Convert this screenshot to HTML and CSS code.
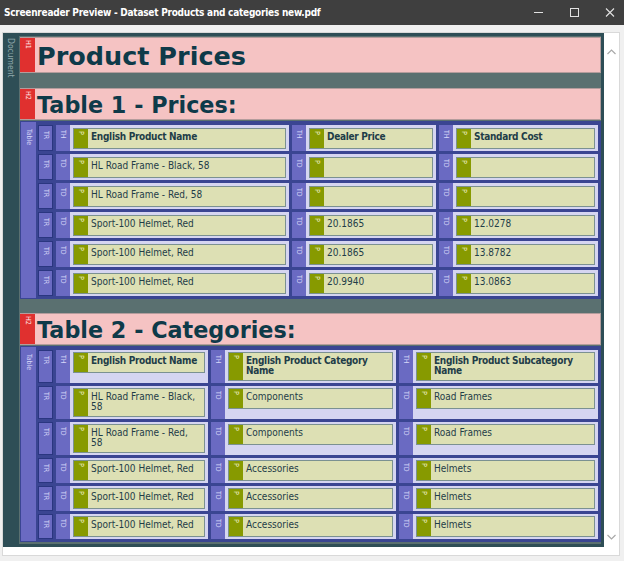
FILE: index.html
```html
<!DOCTYPE html>
<html>
<head>
<meta charset="utf-8">
<link rel="stylesheet" href="styles.css">
</head>
<body>
<div class="titlebar">
  <span class="title">Screenreader Preview - Dataset Products and categories new.pdf</span>
  <div class="controls">
    <svg class="btn" width="36" height="25" viewBox="0 0 36 25"><line x1="14" y1="12.5" x2="23" y2="12.5" stroke="#e2e2e2" stroke-width="1"/></svg>
    <svg class="btn" width="36" height="25" viewBox="0 0 36 25"><rect x="14.5" y="8.5" width="8" height="8" fill="none" stroke="#e2e2e2" stroke-width="1"/></svg>
    <svg class="btn" width="32" height="25" viewBox="0 0 32 25"><path d="M14 8.5 L22 16.5 M22 8.5 L14 16.5" stroke="#e2e2e2" stroke-width="1.1"/></svg>
  </div>
</div>
<div class="main">
  <div class="panel">
    <div class="doc">
      <div class="doc-label"><span>Document</span></div>
      <div class="doc-body">
        <div class="h h1"><div class="htag"><span>H1</span></div><div class="h-text">Product Prices</div></div>
        <div class="h h2"><div class="htag"><span>H2</span></div><div class="h-text">Table 1 - Prices:</div></div>
        <div class="table t1">
          <div class="ttag"><span>Table</span></div>
          <div class="rows">
            <div class="tr">
              <div class="tr-tag"><span>TR</span></div>
              <div class="cell"><div class="ctag"><span>TH</span></div><div class="cbody"><div class="p"><div class="ptag"><span>P</span></div><div class="ptext bold">English Product Name</div></div></div></div>
              <div class="cell"><div class="ctag"><span>TH</span></div><div class="cbody"><div class="p"><div class="ptag"><span>P</span></div><div class="ptext bold">Dealer Price</div></div></div></div>
              <div class="cell"><div class="ctag"><span>TH</span></div><div class="cbody"><div class="p"><div class="ptag"><span>P</span></div><div class="ptext bold">Standard Cost</div></div></div></div>
            </div>
            <div class="tr">
              <div class="tr-tag"><span>TR</span></div>
              <div class="cell"><div class="ctag"><span>TD</span></div><div class="cbody"><div class="p"><div class="ptag"><span>P</span></div><div class="ptext">HL Road Frame - Black, 58</div></div></div></div>
              <div class="cell"><div class="ctag"><span>TD</span></div><div class="cbody"><div class="p"><div class="ptag"><span>P</span></div><div class="ptext"></div></div></div></div>
              <div class="cell"><div class="ctag"><span>TD</span></div><div class="cbody"><div class="p"><div class="ptag"><span>P</span></div><div class="ptext"></div></div></div></div>
            </div>
            <div class="tr">
              <div class="tr-tag"><span>TR</span></div>
              <div class="cell"><div class="ctag"><span>TD</span></div><div class="cbody"><div class="p"><div class="ptag"><span>P</span></div><div class="ptext">HL Road Frame - Red, 58</div></div></div></div>
              <div class="cell"><div class="ctag"><span>TD</span></div><div class="cbody"><div class="p"><div class="ptag"><span>P</span></div><div class="ptext"></div></div></div></div>
              <div class="cell"><div class="ctag"><span>TD</span></div><div class="cbody"><div class="p"><div class="ptag"><span>P</span></div><div class="ptext"></div></div></div></div>
            </div>
            <div class="tr">
              <div class="tr-tag"><span>TR</span></div>
              <div class="cell"><div class="ctag"><span>TD</span></div><div class="cbody"><div class="p"><div class="ptag"><span>P</span></div><div class="ptext">Sport-100 Helmet, Red</div></div></div></div>
              <div class="cell"><div class="ctag"><span>TD</span></div><div class="cbody"><div class="p"><div class="ptag"><span>P</span></div><div class="ptext">20.1865</div></div></div></div>
              <div class="cell"><div class="ctag"><span>TD</span></div><div class="cbody"><div class="p"><div class="ptag"><span>P</span></div><div class="ptext">12.0278</div></div></div></div>
            </div>
            <div class="tr">
              <div class="tr-tag"><span>TR</span></div>
              <div class="cell"><div class="ctag"><span>TD</span></div><div class="cbody"><div class="p"><div class="ptag"><span>P</span></div><div class="ptext">Sport-100 Helmet, Red</div></div></div></div>
              <div class="cell"><div class="ctag"><span>TD</span></div><div class="cbody"><div class="p"><div class="ptag"><span>P</span></div><div class="ptext">20.1865</div></div></div></div>
              <div class="cell"><div class="ctag"><span>TD</span></div><div class="cbody"><div class="p"><div class="ptag"><span>P</span></div><div class="ptext">13.8782</div></div></div></div>
            </div>
            <div class="tr">
              <div class="tr-tag"><span>TR</span></div>
              <div class="cell"><div class="ctag"><span>TD</span></div><div class="cbody"><div class="p"><div class="ptag"><span>P</span></div><div class="ptext">Sport-100 Helmet, Red</div></div></div></div>
              <div class="cell"><div class="ctag"><span>TD</span></div><div class="cbody"><div class="p"><div class="ptag"><span>P</span></div><div class="ptext">20.9940</div></div></div></div>
              <div class="cell"><div class="ctag"><span>TD</span></div><div class="cbody"><div class="p"><div class="ptag"><span>P</span></div><div class="ptext">13.0863</div></div></div></div>
            </div>
          </div>
        </div>
        <div class="h h2"><div class="htag"><span>H2</span></div><div class="h-text">Table 2 - Categories:</div></div>
        <div class="table t2">
          <div class="ttag"><span>Table</span></div>
          <div class="rows">
            <div class="tr">
              <div class="tr-tag"><span>TR</span></div>
              <div class="cell"><div class="ctag"><span>TH</span></div><div class="cbody"><div class="p"><div class="ptag"><span>P</span></div><div class="ptext bold">English Product Name</div></div></div></div>
              <div class="cell"><div class="ctag"><span>TH</span></div><div class="cbody"><div class="p"><div class="ptag"><span>P</span></div><div class="ptext bold">English Product Category Name</div></div></div></div>
              <div class="cell"><div class="ctag"><span>TH</span></div><div class="cbody"><div class="p"><div class="ptag"><span>P</span></div><div class="ptext bold">English Product Subcategory Name</div></div></div></div>
            </div>
            <div class="tr">
              <div class="tr-tag"><span>TR</span></div>
              <div class="cell"><div class="ctag"><span>TD</span></div><div class="cbody"><div class="p"><div class="ptag"><span>P</span></div><div class="ptext">HL Road Frame - Black, 58</div></div></div></div>
              <div class="cell"><div class="ctag"><span>TD</span></div><div class="cbody"><div class="p"><div class="ptag"><span>P</span></div><div class="ptext">Components</div></div></div></div>
              <div class="cell"><div class="ctag"><span>TD</span></div><div class="cbody"><div class="p"><div class="ptag"><span>P</span></div><div class="ptext">Road Frames</div></div></div></div>
            </div>
            <div class="tr">
              <div class="tr-tag"><span>TR</span></div>
              <div class="cell"><div class="ctag"><span>TD</span></div><div class="cbody"><div class="p"><div class="ptag"><span>P</span></div><div class="ptext">HL Road Frame - Red, 58</div></div></div></div>
              <div class="cell"><div class="ctag"><span>TD</span></div><div class="cbody"><div class="p"><div class="ptag"><span>P</span></div><div class="ptext">Components</div></div></div></div>
              <div class="cell"><div class="ctag"><span>TD</span></div><div class="cbody"><div class="p"><div class="ptag"><span>P</span></div><div class="ptext">Road Frames</div></div></div></div>
            </div>
            <div class="tr">
              <div class="tr-tag"><span>TR</span></div>
              <div class="cell"><div class="ctag"><span>TD</span></div><div class="cbody"><div class="p"><div class="ptag"><span>P</span></div><div class="ptext">Sport-100 Helmet, Red</div></div></div></div>
              <div class="cell"><div class="ctag"><span>TD</span></div><div class="cbody"><div class="p"><div class="ptag"><span>P</span></div><div class="ptext">Accessories</div></div></div></div>
              <div class="cell"><div class="ctag"><span>TD</span></div><div class="cbody"><div class="p"><div class="ptag"><span>P</span></div><div class="ptext">Helmets</div></div></div></div>
            </div>
            <div class="tr">
              <div class="tr-tag"><span>TR</span></div>
              <div class="cell"><div class="ctag"><span>TD</span></div><div class="cbody"><div class="p"><div class="ptag"><span>P</span></div><div class="ptext">Sport-100 Helmet, Red</div></div></div></div>
              <div class="cell"><div class="ctag"><span>TD</span></div><div class="cbody"><div class="p"><div class="ptag"><span>P</span></div><div class="ptext">Accessories</div></div></div></div>
              <div class="cell"><div class="ctag"><span>TD</span></div><div class="cbody"><div class="p"><div class="ptag"><span>P</span></div><div class="ptext">Helmets</div></div></div></div>
            </div>
            <div class="tr">
              <div class="tr-tag"><span>TR</span></div>
              <div class="cell"><div class="ctag"><span>TD</span></div><div class="cbody"><div class="p"><div class="ptag"><span>P</span></div><div class="ptext">Sport-100 Helmet, Red</div></div></div></div>
              <div class="cell"><div class="ctag"><span>TD</span></div><div class="cbody"><div class="p"><div class="ptag"><span>P</span></div><div class="ptext">Accessories</div></div></div></div>
              <div class="cell"><div class="ctag"><span>TD</span></div><div class="cbody"><div class="p"><div class="ptag"><span>P</span></div><div class="ptext">Helmets</div></div></div></div>
            </div>
          </div>
        </div>
      </div>
    </div>
    <div class="scrollbar">
      <svg width="15" height="10" viewBox="0 0 15 10"><path d="M3.5 7 L7.5 3 L11.5 7" fill="none" stroke="#a8a8a8" stroke-width="1.2"/></svg>
      <svg width="15" height="10" viewBox="0 0 15 10"><path d="M3.5 3 L7.5 7 L11.5 3" fill="none" stroke="#a8a8a8" stroke-width="1.2"/></svg>
    </div>
  </div>
</div>
</body>
</html>
```

FILE: styles.css
```css
* { box-sizing: border-box; }
html, body { margin: 0; padding: 0; }
body {
  width: 624px;
  height: 561px;
  overflow: hidden;
  background: #f0f0f0;
  font-family: "DejaVu Sans Condensed", "DejaVu Sans", sans-serif;
}

.titlebar {
  height: 25px;
  background: #3f3f3f;
  display: flex;
  align-items: center;
  justify-content: space-between;
  padding-left: 4px;
}
.title {
  color: #ffffff;
  font-weight: bold;
  font-size: 10px;
  letter-spacing: -0.25px;
  white-space: nowrap;
}
.controls { display: flex; }
.btn { display: block; }

.main { padding: 7px 4px 5px 2px; }
.panel {
  height: 524px;
  background: #ffffff;
  border: 1px solid #d9d9d9;
  display: flex;
  align-items: flex-start;
}
.doc {
  width: 601px;
  height: 514px;
  background: #2e4e56;
  display: flex;
  overflow: hidden;
}
.doc-label {
  width: 16px;
  flex: none;
  display: flex;
  flex-direction: column;
  align-items: center;
  padding-top: 5px;
}
.doc-label span {
  writing-mode: vertical-rl;
  font-size: 8.5px;
  color: #8fa7ab;
}
.doc-body {
  flex: 1;
  margin: 3px 3px 3px 0;
  background: #5a7070;
  padding: 1px 0 0 1px;
  overflow: hidden;
}

.h {
  display: flex;
  background: #f5c3c3;
  border: 1px solid #b49c9c;
  border-left: none;
}
.h1 { height: 36px; margin-bottom: 15px; }
.h2 { height: 32px; }
.htag {
  width: 15px;
  flex: none;
  background: #e0302f;
  display: flex;
  flex-direction: column;
  align-items: center;
  padding-top: 2px;
}
.htag span, .ttag span, .tr-tag span, .ctag span, .ptag span {
  writing-mode: vertical-rl;
  font-size: 7px;
  line-height: 8px;
}
.htag span { color: #ffe8e8; }
.h-text {
  font-family: "DejaVu Sans", sans-serif;
  font-weight: bold;
  color: #0e3a49;
  padding-left: 2px;
}
.h1 .h-text { font-size: 25.5px; line-height: 34px; padding-top: 1px; }
.h2 .h-text { font-size: 22.3px; line-height: 30px; padding-top: 1px; }

.table {
  display: flex;
  background: #6a6ac2;
  border: 1px solid #3a4592;
  margin-top: 1px;
}
.t1 { margin-bottom: 14px; }
.ttag {
  width: 15px;
  flex: none;
  display: flex;
  flex-direction: column;
  align-items: center;
  padding-top: 7px;
}
.ttag span { color: #d2d2f6; }
.rows {
  flex: 1;
  background: #3a4592;
  padding: 3px 2px 2px 2px;
  display: flex;
  flex-direction: column;
  gap: 3px;
}
.tr {
  display: grid;
  column-gap: 3px;
}
.t1 .tr { grid-template-columns: 15px 233px 144px 159px; }
.t2 .tr { grid-template-columns: 15px 152px 185px 199px; }
.tr-tag {
  background: #6a6ac2;
  border: 1px solid #2a3680;
  display: flex;
  flex-direction: column;
  align-items: center;
  padding-top: 5px;
}
.tr-tag span, .ctag span { color: #d6d6f8; }
.cell { display: flex; }
.ctag {
  width: 14px;
  flex: none;
  background: #6a6ac2;
  display: flex;
  flex-direction: column;
  align-items: center;
  padding-top: 5px;
}
.cbody {
  flex: 1;
  background: #d5d5f1;
  padding: 3px 3px 2px 3px;
}
.t2 .cbody { padding: 2px 3px; }
.p {
  display: flex;
  min-height: 21px;
  background: #dde0b4;
  border: 1px solid #7b9191;
}
.ptag {
  width: 14px;
  flex: none;
  background: #879a00;
  display: flex;
  flex-direction: column;
  align-items: center;
  padding-top: 2px;
}
.ptag span { color: #f4f4d8; }
.ptext {
  flex: 1;
  padding: 3px 3px 4px 3px;
  font-size: 10px;
  line-height: 10px;
  color: #1f3d48;
}
.bold { font-weight: bold; letter-spacing: -0.3px; }

.scrollbar {
  width: 15px;
  height: 100%;
  display: flex;
  flex-direction: column;
  justify-content: space-between;
  padding: 14px 0 13px 0;
}
.scrollbar svg { display: block; }
```
